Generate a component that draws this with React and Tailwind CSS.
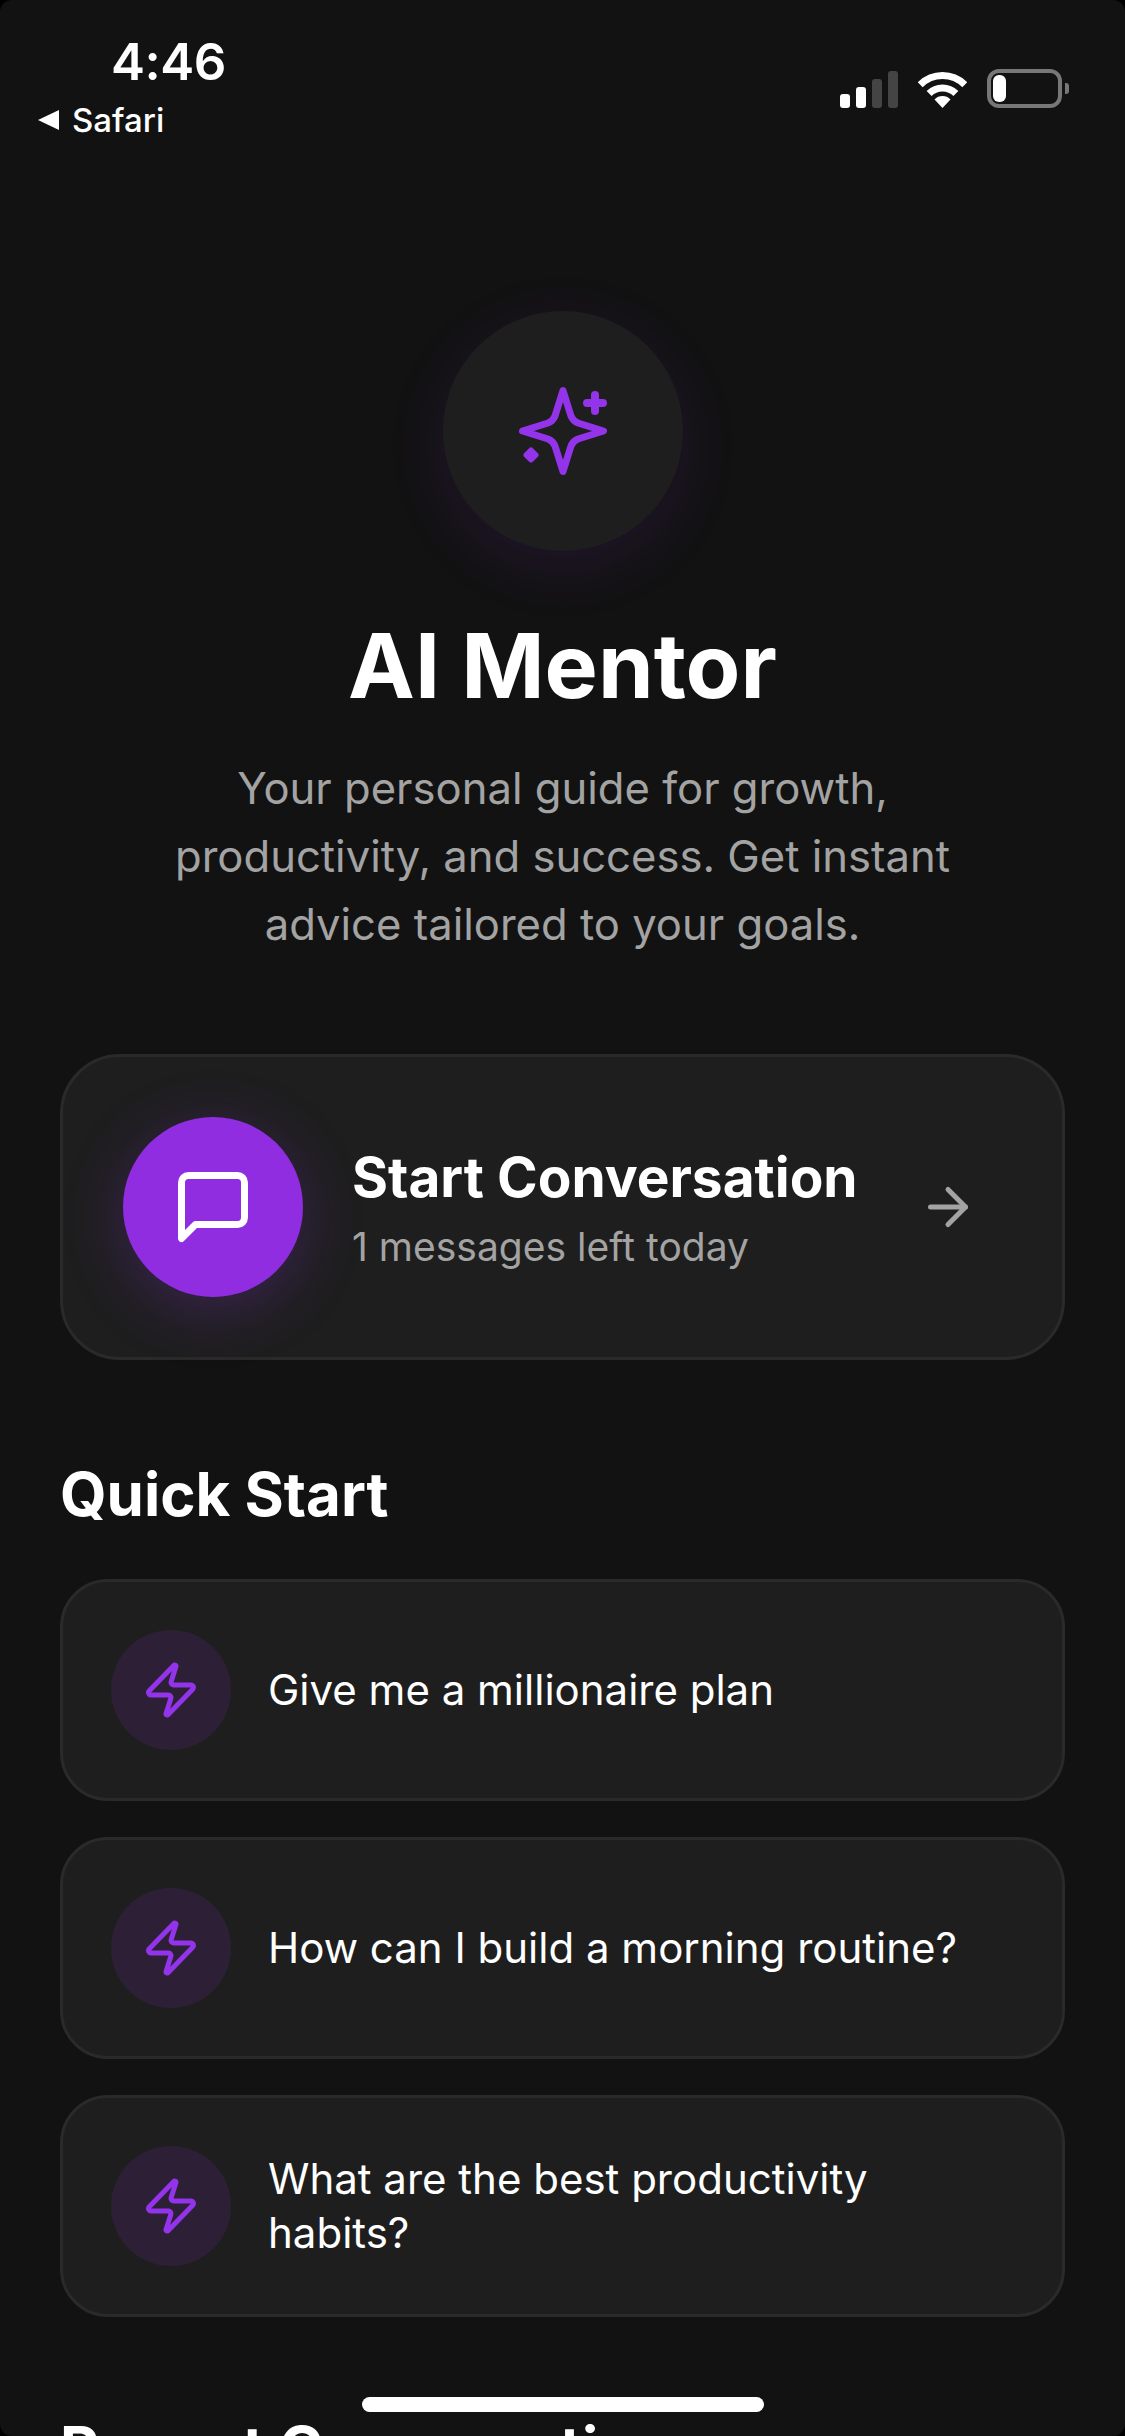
import React from 'react';
import { ArrowRight, Zap } from 'lucide-react';

const prompts = [
  'Give me a millionaire plan',
  'How can I build a morning routine?',
  'What are the best productivity habits?',
];

function StatusBar() {
  return (
    <div className="flex items-start justify-between text-white">
      <div className="flex flex-col pl-[38px] pt-[32px]">
        <span className="ml-[73px] text-[51px] leading-[60px] font-semibold tracking-[-0.5px]">4:46</span>
        <div className="mt-[8px] flex items-center gap-[13px]">
          <span className="h-0 w-0 border-y-[10px] border-r-[21px] border-y-transparent border-r-white" />
          <span className="text-[33px] leading-[40px] font-medium">Safari</span>
        </div>
      </div>
      <div className="flex items-end pt-[69px] pr-[56px]">
        <div className="flex items-end gap-[6px]">
          <span className="h-[14px] w-[10px] rounded-[3px] bg-white" />
          <span className="h-[21px] w-[10px] rounded-[3px] bg-white" />
          <span className="h-[29px] w-[10px] rounded-[3px] bg-[#444444]" />
          <span className="h-[37px] w-[10px] rounded-[3px] bg-[#444444]" />
        </div>
        <svg className="ml-[20px]" width="49" height="37" viewBox="0 0 49 37" fill="none">
          <path d="M2.2 13.7a31.5 31.5 0 0 1 44.6 0" stroke="#fff" strokeWidth="7" />
          <path d="M11.1 22.6a19 19 0 0 1 26.8 0" stroke="#fff" strokeWidth="7" />
          <path d="M24.5 37 16.5 28.5a11 11 0 0 1 16 0z" fill="#fff" />
        </svg>
        <div className="ml-[20px] flex items-center">
          <div className="h-[39px] w-[75px] rounded-[12px] border-[4px] border-[#777777] pl-[2px] pt-[2px]">
            <div className="h-[27px] w-[13px] rounded-[6px] bg-white" />
          </div>
          <span className="ml-[3px] h-[11px] w-[4px] rounded-r-[3px] bg-[#777777]" />
        </div>
      </div>
    </div>
  );
}

function SparkleIcon() {
  return (
    <svg width="96" height="96" viewBox="0 0 96 96" fill="none" stroke="#9333ea" strokeWidth="7" strokeLinecap="round" strokeLinejoin="round">
      <path d="M48 7.5 L56 33 Q58 38 63 40 L88.5 48 L63 56 Q58 58 56 63 L48 88.5 L40 63 Q38 58 33 56 L7.5 48 L33 40 Q38 38 40 33 Z" />
      <path d="M80 12 V28 M72 20 H88" strokeWidth="8" />
      <path d="M16 67.5 L20.5 72 L16 76.5 L11.5 72 Z" fill="#9333ea" strokeWidth="6" />
    </svg>
  );
}

function ChatIcon() {
  return (
    <svg width="84" height="84" viewBox="0 0 24 24" fill="none" stroke="#ffffff" strokeWidth="2" strokeLinecap="round" strokeLinejoin="round">
      <path d="M21 15a2 2 0 0 1-2 2H7l-4 4V5a2 2 0 0 1 2-2h14a2 2 0 0 1 2 2z" />
    </svg>
  );
}

export default function App() {
  return (
    <div className="h-[2436px] w-[1125px] overflow-hidden bg-black" style={{ fontFamily: 'Inter, sans-serif' }}>
      <div className="relative h-full overflow-hidden rounded-[12px] bg-[#121212] px-[60px]">
        <div className="-mx-[60px]">
          <StatusBar />
        </div>

        {/* Hero */}
        <div className="flex flex-col items-center pt-[171px]">
          <div className="flex h-[240px] w-[240px] items-center justify-center rounded-full bg-[#1e1e1e] shadow-[0_16px_60px_rgba(147,51,234,0.12)]">
            <SparkleIcon />
          </div>
          <h1 className="mt-[65px] text-[89.5px] leading-[100px] font-bold text-white">AI Mentor</h1>
          <p className="mt-[39px] w-[840px] text-center text-[43.6px] leading-[68px] text-[#a3a3a3]">
            Your personal guide for growth, productivity, and success. Get instant advice tailored to your goals.
          </p>
        </div>

        {/* Start conversation */}
        <div className="mt-[95px] flex h-[306px] items-center rounded-[60px] border-[3px] border-[#2a2a2a] bg-[#1e1e1e] pl-[60px] pr-[84px]">
          <div className="flex h-[180px] w-[180px] shrink-0 items-center justify-center rounded-full bg-[#902de0] shadow-[0_12px_60px_rgba(147,51,234,0.25)]">
            <ChatIcon />
          </div>
          <div className="ml-[49px] flex-1">
            <div className="text-[55px] leading-[66px] font-bold text-white">Start Conversation</div>
            <div className="mt-[13px] text-[39px] leading-[48px] text-[#a3a3a3]">1 messages left today</div>
          </div>
          <ArrowRight size={60} color="#a3a3a3" strokeWidth={2} />
        </div>

        {/* Quick start */}
        <h2 className="mt-[98px] text-[60px] leading-[72px] font-bold text-white">Quick Start</h2>
        <div className="mt-[49px] flex flex-col gap-[36px]">
          {prompts.map(prompt => (
            <div
              key={prompt}
              className="flex h-[222px] items-center gap-[37px] rounded-[48px] border-[3px] border-[#2a2a2a] bg-[#1e1e1e] px-[48px]"
            >
              <div className="flex h-[120px] w-[120px] shrink-0 items-center justify-center rounded-full bg-[#2d2036]">
                <Zap size={60} color="#9333ea" strokeWidth={2} />
              </div>
              <span className="text-[42px] leading-[54px] font-normal text-white">{prompt}</span>
            </div>
          ))}
        </div>

        <h2 className="mt-[95px] text-[60px] leading-[72px] font-bold text-white">Recent Conversations</h2>

        {/* Home indicator */}
        <div className="absolute bottom-[24px] left-[362px] h-[15px] w-[402px] rounded-full bg-white" />
      </div>
    </div>
  );
}
